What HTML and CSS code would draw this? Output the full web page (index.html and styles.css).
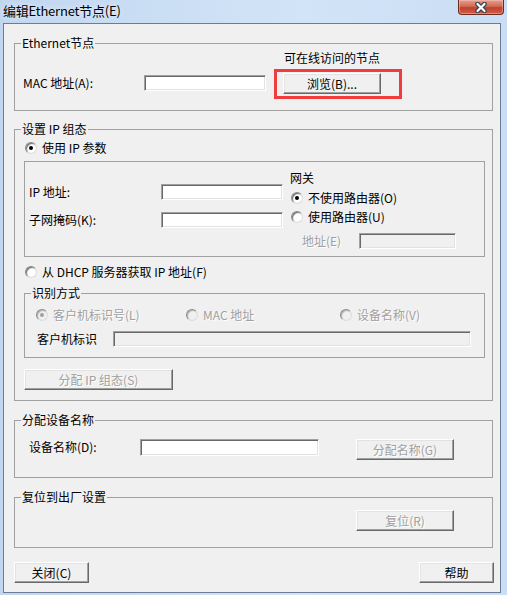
FILE: index.html
```html
<!DOCTYPE html>
<html lang="zh-CN">
<head>
    <meta charset="UTF-8">
    <title>编辑Ethernet节点(E)</title>
    <link rel="stylesheet" href="styles.css">
</head>
<body>
<div class="window">

    <!-- Title bar -->
    <div class="titlebar">
        <span class="title">编辑Ethernet节点(E)</span>
        <span class="close-btn">
            <svg width="14" height="11" viewBox="0 0 14 11">
                <path d="M3.5 2 L10.5 9 M10.5 2 L3.5 9" stroke="#3b4757" stroke-width="4.6" stroke-linecap="round" fill="none"/>
                <path d="M3.5 2 L10.5 9 M10.5 2 L3.5 9" stroke="#ffffff" stroke-width="2.2" stroke-linecap="round" fill="none"/>
            </svg>
        </span>
    </div>

    <div class="client">

        <!-- Ethernet node -->
        <fieldset class="group group-eth">
            <legend>Ethernet节点</legend>
            <div class="eth-body">
                <span class="caption">可在线访问的节点</span>
                <span class="label eth-label">MAC 地址(A):</span>
                <input class="field eth-field" type="text">
                <div class="mark">
                    <button class="btn btn-browse">浏览(B)...</button>
                </div>
            </div>
        </fieldset>

        <!-- IP configuration -->
        <fieldset class="group group-ip">
            <legend>设置 IP 组态</legend>
            <div class="ip-body">
                <div class="radio-row first">
                    <span class="radio checked"></span>
                    <span>使用 IP 参数</span>
                </div>

                <div class="static-box">
                    <div class="ip-fields">
                        <div class="field-row">
                            <span class="label ip-label">IP 地址:</span>
                            <input class="field ip-field" type="text">
                        </div>
                        <div class="field-row">
                            <span class="label ip-label">子网掩码(K):</span>
                            <input class="field ip-field" type="text">
                        </div>
                    </div>
                    <div class="gateway">
                        <div class="gw-title">网关</div>
                        <div class="radio-row gw-radio gw-first">
                            <span class="radio checked"></span>
                            <span>不使用路由器(O)</span>
                        </div>
                        <div class="radio-row gw-radio gw-second">
                            <span class="radio"></span>
                            <span>使用路由器(U)</span>
                        </div>
                        <div class="field-row gw-addr">
                            <span class="label addr-label disabled">地址(E)</span>
                            <input class="field addr-field" type="text" disabled>
                        </div>
                    </div>
                </div>

                <div class="radio-row dhcp">
                    <span class="radio"></span>
                    <span>从 DHCP 服务器获取 IP 地址(F)</span>
                </div>

                <fieldset class="group group-id">
                    <legend>识别方式</legend>
                    <div class="id-body">
                        <div class="id-radios">
                            <div class="radio-row">
                                <span class="radio checked off"></span>
                                <span class="disabled">客户机标识号(L)</span>
                            </div>
                            <div class="radio-row">
                                <span class="radio off"></span>
                                <span class="disabled">MAC 地址</span>
                            </div>
                            <div class="radio-row">
                                <span class="radio off"></span>
                                <span class="disabled">设备名称(V)</span>
                            </div>
                        </div>
                        <div class="field-row id-row">
                            <span class="label id-label">客户机标识</span>
                            <input class="field id-field" type="text" disabled>
                        </div>
                    </div>
                </fieldset>

                <button class="btn btn-assign-ip" disabled>分配 IP 组态(S)</button>
            </div>
        </fieldset>

        <!-- Device name -->
        <fieldset class="group group-name">
            <legend>分配设备名称</legend>
            <div class="name-body">
                <span class="label name-label">设备名称(D):</span>
                <input class="field name-field" type="text">
                <button class="btn btn-side" disabled>分配名称(G)</button>
            </div>
        </fieldset>

        <!-- Factory reset -->
        <fieldset class="group group-reset">
            <legend>复位到出厂设置</legend>
            <div class="reset-body">
                <button class="btn btn-side" disabled>复位(R)</button>
            </div>
        </fieldset>

        <div class="footer">
            <button class="btn btn-foot">关闭(C)</button>
            <button class="btn btn-foot btn-help">帮助</button>
        </div>
    </div>
</div>
</body>
</html>
```

FILE: styles.css
```css
/* General */
* {
    box-sizing: border-box;
    margin: 0;
    padding: 0;
}

body {
    width: 507px;
    height: 595px;
    overflow: hidden;
    font-family: "Noto Sans CJK SC", sans-serif;
    font-size: 12px;
    line-height: 14px;
    color: #000;
}

/* Window frame */
.window {
    height: 595px;
    background: linear-gradient(to right, #c1d7f0, #d2e4f7 60%, #c9ddf4);
}

.titlebar {
    height: 23px;
    display: flex;
    justify-content: space-between;
    align-items: flex-start;
    padding: 0 3px 0 3px;
}

.title {
    font-size: 13px;
    line-height: 22px;
    letter-spacing: -0.2px;
    text-shadow: 0 0 6px rgba(255, 255, 255, 0.9);
}

.close-btn {
    width: 46px;
    height: 15px;
    display: flex;
    justify-content: center;
    align-items: center;
    border: 1px solid #6e2a1f;
    border-top: none;
    border-radius: 0 0 4px 4px;
    background: linear-gradient(#e4a190, #d06a55 45%, #c0412c 55%, #cf5e47);
    box-shadow: inset 0 0 0 1px rgba(255, 200, 190, 0.45);
}

.client {
    height: 570px;
    margin: 0 6px 0 3px;
    padding: 0 7px 0 10px;
    border: 1px solid #6b7c93;
    background: #f0f0f0;
}

/* Group boxes */
.group {
    border: 1px solid #a0a0a0;
    min-width: 0;
}

.group legend {
    margin-left: 6px;
    padding: 0 1px;
    line-height: 14px;
}

.label {
    white-space: nowrap;
}

.disabled {
    color: #a0a0a0;
    text-shadow: 1px 1px 0 #fff;
}

/* Controls */
.field {
    display: block;
    height: 16px;
    border: 1px solid;
    border-color: #a0a0a0 #fff #fff #a0a0a0;
    box-shadow: inset 1px 1px 0 #696969, inset -1px -1px 0 #e3e3e3;
    background: #fff;
    font: inherit;
    outline: none;
}

.field:disabled {
    background: #f0f0f0;
}

.btn {
    display: block;
    height: 21px;
    border: 1px solid;
    border-color: #fff #696969 #696969 #fff;
    box-shadow: inset -1px -1px 0 #a0a0a0, inset 1px 1px 0 #e3e3e3;
    background: #f0f0f0;
    font: inherit;
    line-height: 17px;
    color: #000;
    text-align: center;
}

.btn:disabled {
    color: #a0a0a0;
    text-shadow: 1px 1px 0 #fff;
}

.radio-row {
    display: flex;
    align-items: center;
    gap: 5px;
    height: 14px;
    white-space: nowrap;
}

.radio {
    position: relative;
    flex: none;
    width: 12px;
    height: 12px;
    border-radius: 50%;
    border: 1px solid;
    border-color: #8a8a8a #dcdcdc #dcdcdc #8a8a8a;
    box-shadow: inset 1px 1px 1px #6a6a6a;
    background: #fff;
}

.radio.checked::after {
    content: "";
    position: absolute;
    top: 3px;
    left: 3px;
    width: 4px;
    height: 4px;
    border-radius: 50%;
    background: #000;
}

.radio.off {
    background: #f0f0f0;
    box-shadow: inset 1px 1px 1px #b0b0b0;
}

.radio.off.checked::after {
    background: #a0a0a0;
}

/* Ethernet node */
.group-eth {
    margin-top: 12px;
}

.eth-body {
    display: grid;
    grid-template-columns: 121px 122px auto;
    align-items: center;
    padding: 1px 0 11px 8px;
}

.caption {
    grid-column: 3;
    margin: 0 0 4px 18px;
}

.eth-label,
.eth-field {
    margin-bottom: 2px;
}

.eth-field {
    width: 122px;
}

.mark {
    justify-self: start;
    margin-left: 8px;
    padding: 1px 18px 2px 6px;
    border: 3px solid #f03c3c;
}

.btn-browse {
    width: 98px;
}

/* IP configuration */
.group-ip {
    margin-top: 11px;
}

.ip-body {
    padding: 5px 7px 10px 9px;
}

.radio-row.first,
.radio-row.dhcp {
    margin-left: 1px;
}

.static-box {
    display: flex;
    margin-top: 6px;
    padding: 0 0 7px 4px;
    border: 1px solid #a0a0a0;
}

.ip-fields {
    display: flex;
    flex-direction: column;
    gap: 12px;
    padding-top: 22px;
}

.field-row {
    display: flex;
    align-items: center;
}

.ip-label {
    width: 132px;
}

.ip-field {
    width: 122px;
}

.gateway {
    margin-left: 7px;
    padding-top: 9px;
}

.gw-radio {
    margin-left: 1px;
}

.gw-first {
    margin-top: 6px;
}

.gw-second {
    margin-top: 5px;
}

.gw-addr {
    margin-top: 9px;
    padding-left: 12px;
}

.addr-label {
    width: 57px;
}

.addr-field {
    width: 97px;
}

.radio-row.dhcp {
    margin-top: 8px;
}

.group-id {
    margin-top: 7px;
}

.id-body {
    padding: 8px 0 10px 11px;
}

.id-radios {
    display: grid;
    grid-template-columns: 150px 154px auto;
}

.id-row {
    margin-top: 9px;
}

.id-label {
    width: 76px;
    margin-left: 1px;
}

.id-field {
    width: 358px;
}

.btn-assign-ip {
    width: 149px;
    margin-top: 11px;
}

/* Device name */
.group-name {
    margin-top: 12px;
}

.name-body {
    display: flex;
    align-items: flex-start;
    padding: 12px 0 17px 14px;
}

.name-label {
    width: 111px;
    margin-top: 1px;
}

.name-field {
    width: 179px;
    height: 17px;
}

.btn-side {
    width: 98px;
}

.name-body .btn-side {
    margin-left: 37px;
}

/* Factory reset */
.group-reset {
    margin-top: 12px;
}

.reset-body {
    padding: 6px 0 16px 341px;
}

/* Footer buttons */
.footer {
    display: flex;
    justify-content: space-between;
    margin: 14px -1px 0 0;
}

.btn-foot {
    width: 75px;
}
```
